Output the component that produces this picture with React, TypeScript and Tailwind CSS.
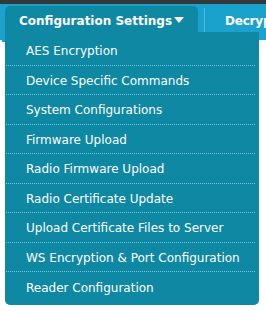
import React from "react";

const items = [
  "AES Encryption",
  "Device Specific Commands",
  "System Configurations",
  "Firmware Upload",
  "Radio Firmware Upload",
  "Radio Certificate Update",
  "Upload Certificate Files to Server",
  "WS Encryption & Port Configuration",
  "Reader Configuration",
];

export default function App() {
  return (
    <div className="relative w-[266px] h-[311px] bg-white overflow-hidden font-['DejaVu_Sans',sans-serif] text-white">
      <div className="h-[4px] bg-[#33383b]" />
      <div className="h-[36px] bg-[#1aa2cd] flex items-start pt-[2px] pl-[5px] overflow-hidden">
        <div className="shrink-0 w-[193px] h-[34px] bg-[#0f88a4] rounded-t-[5px] flex items-start pt-[6px] pl-[14px] text-[12px] font-bold whitespace-nowrap">
          Configuration Settings
          <span className="ml-[2px] mt-[5px] w-0 h-0 border-l-[5px] border-r-[5px] border-t-[6px] border-l-transparent border-r-transparent border-t-white" />
        </div>
        <div className="shrink-0 ml-[6px] mt-[2px] w-px h-[24px] bg-[#4cbce0]" />
        <div className="shrink-0 pl-[20px] pt-[6px] text-[12px] font-bold whitespace-nowrap tracking-[-0.2px]">Decryption</div>
      </div>
      <div className="absolute left-[2px] top-[36px] w-[3px] h-[6px] bg-[#1aa2cd]" />
      <div className="absolute left-[5px] top-[32px] w-[254px] h-[273px] bg-[#0f88a4] rounded-b-[5px] pt-[4px] flex flex-col">
        {items.map((t, i) => (
          <div
            key={t}
            className={`h-[29.5px] flex items-center pl-[20px] pt-[2px] text-[12px] whitespace-nowrap ml-[1px] mr-[4px] ${
              i < items.length - 1 ? "border-b border-dotted border-[#6cc3da]" : ""
            }`}
          >
            {t}
          </div>
        ))}
      </div>
    </div>
  );
}
